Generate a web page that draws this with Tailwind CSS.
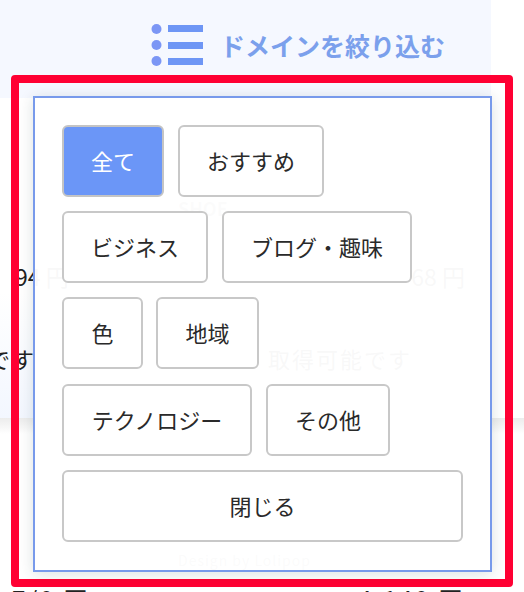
<!DOCTYPE html>
<html lang="ja">
<head>
<meta charset="utf-8">
<script src="https://cdn.jsdelivr.net/npm/@tailwindcss/browser@4"></script>
</head>
<body class="bg-white">
<div class="relative w-[524px] h-[592px] overflow-hidden bg-white font-['Noto_Sans_CJK_JP','Noto_Sans',sans-serif] text-[#222]">
  <!-- page behind -->
  <div class="w-[491px] h-[98px] bg-[#f5f8ff] pt-[24px] pl-[151px] flex items-start gap-[17px]">
    <svg width="52" height="42" viewBox="0 0 52 42" class="shrink-0">
      <circle cx="5.500" cy="5" r="5" fill="#7b96f5"/>
      <circle cx="5.500" cy="21" r="5" fill="#7b96f5"/>
      <circle cx="5.500" cy="37" r="5" fill="#7b96f5"/>
      <rect x="17" y="1" width="35" height="7" fill="#6e96f5"/>
      <rect x="17" y="18" width="35" height="7" fill="#6e96f5"/>
      <rect x="17" y="34" width="35" height="7" fill="#6e96f5"/>
    </svg>
    <span class="text-[25px] leading-[42px] font-bold text-[#7ba0ec] whitespace-nowrap">ドメインを絞り込む</span>
  </div>
  <div class="pt-[100px] pl-[178px] h-[120px] text-[18px] leading-[20px] font-bold text-[#888]">SHOE</div>
  <div class="flex justify-between pl-[15px] pr-[59px] mt-[42px] h-[32px] text-[23px] leading-[32px] whitespace-nowrap">
    <span>94 円</span>
    <span>68 円</span>
  </div>
  <div class="w-[491px] h-[126px] bg-gradient-to-b from-white to-[#f3f7ff] pt-[52px]">
    <div class="flex ml-[-108px] gap-[232px] text-[22px] leading-[28px] tracking-[2px] whitespace-nowrap">
      <span>取得可能です</span>
      <span>取得可能です</span>
    </div>
  </div>
  <div class="h-[16px] bg-gradient-to-b from-[#ececec] to-white"></div>
  <div class="pt-[119px] pl-[178px] h-[153px] text-[14px] leading-[14px] tracking-[1px] text-[#777]">Design by Lolipop</div>
  <div class="flex justify-between pl-[12px] pr-[59px] text-[24px] leading-[24px] tracking-[2.5px] whitespace-nowrap">
    <span>7/0 円</span>
    <span>4,140 円</span>
  </div>

  <!-- modal overlay -->
  <div class="absolute left-[11px] top-[75px] w-[502px] h-[512px] rounded-[4px] border-[8px] border-[#ff0033] pl-[14px] pt-[13px]">
    <div class="w-[459px] h-[476px] border-2 border-[#789aeb] bg-white/97 shadow-[0_2px_14px_rgba(0,50,50,0.14)] pl-[27px] pt-[27px] flex flex-col gap-[14px] text-[22px] leading-none text-[#2a2a2a]">
      <div class="flex gap-[14px]">
        <button class="h-[72px] w-[102px] pb-[3px] rounded-[6px] border-2 border-[#c4c4c4] bg-[#6b96f7] text-white">全て</button>
        <button class="h-[72px] w-[146px] pb-[3px] rounded-[6px] border-2 border-[#c8c8c8] bg-white">おすすめ</button>
      </div>
      <div class="flex gap-[14px]">
        <button class="h-[72px] w-[146px] pb-[3px] rounded-[6px] border-2 border-[#c8c8c8] bg-white">ビジネス</button>
        <button class="h-[72px] w-[190px] pb-[3px] rounded-[6px] border-2 border-[#c8c8c8] bg-white">ブログ・趣味</button>
      </div>
      <div class="flex gap-[13px]">
        <button class="h-[72px] w-[81px] pb-[3px] rounded-[6px] border-2 border-[#c8c8c8] bg-white">色</button>
        <button class="h-[72px] w-[103px] pb-[3px] rounded-[6px] border-2 border-[#c8c8c8] bg-white">地域</button>
      </div>
      <div class="flex gap-[14px] mt-[1px]">
        <button class="h-[72px] w-[190px] pb-[3px] rounded-[6px] border-2 border-[#c8c8c8] bg-white">テクノロジー</button>
        <button class="h-[72px] w-[124px] pb-[3px] rounded-[6px] border-2 border-[#c8c8c8] bg-white">その他</button>
      </div>
      <button class="h-[72px] w-[401px] pb-[3px] rounded-[6px] border-2 border-[#c8c8c8] bg-white">閉じる</button>
    </div>
  </div>
</div>
</body>
</html>
